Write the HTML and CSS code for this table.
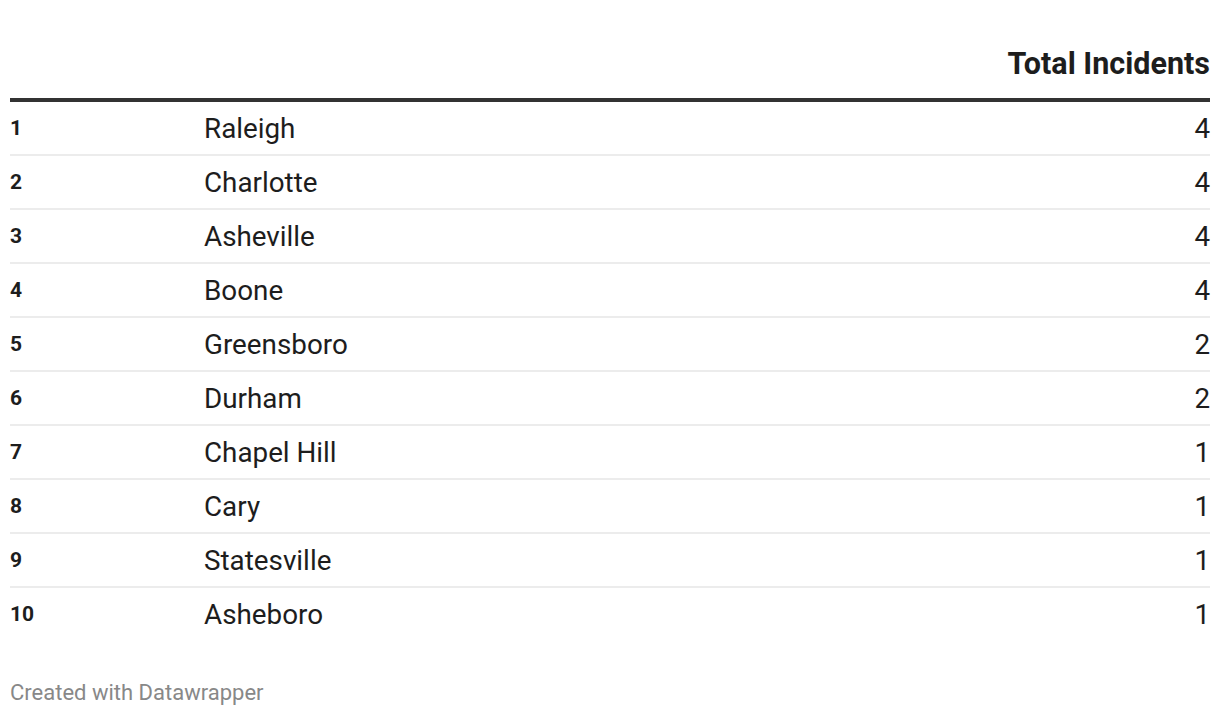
FILE: index.html
```html
<!DOCTYPE html>
<html>
<head>
<meta charset="utf-8">
<link rel="stylesheet" href="styles.css">
</head>
<body>
<div class="chart">
  <table class="tbl">
    <thead>
      <tr>
        <th class="c-rank"></th>
        <th class="c-city"></th>
        <th class="c-val">Total Incidents</th>
      </tr>
    </thead>
    <tbody>
      <tr><td class="c-rank">1</td><td class="c-city">Raleigh</td><td class="c-val">4</td></tr>
      <tr><td class="c-rank">2</td><td class="c-city">Charlotte</td><td class="c-val">4</td></tr>
      <tr><td class="c-rank">3</td><td class="c-city">Asheville</td><td class="c-val">4</td></tr>
      <tr><td class="c-rank">4</td><td class="c-city">Boone</td><td class="c-val">4</td></tr>
      <tr><td class="c-rank">5</td><td class="c-city">Greensboro</td><td class="c-val">2</td></tr>
      <tr><td class="c-rank">6</td><td class="c-city">Durham</td><td class="c-val">2</td></tr>
      <tr><td class="c-rank">7</td><td class="c-city">Chapel Hill</td><td class="c-val">1</td></tr>
      <tr><td class="c-rank">8</td><td class="c-city">Cary</td><td class="c-val">1</td></tr>
      <tr><td class="c-rank">9</td><td class="c-city">Statesville</td><td class="c-val">1</td></tr>
      <tr><td class="c-rank">10</td><td class="c-city">Asheboro</td><td class="c-val">1</td></tr>
    </tbody>
  </table>
  <div class="footer">Created with Datawrapper</div>
</div>
</body>
</html>
```
FILE: styles.css
```css
html, body {
  margin: 0;
  padding: 0;
  background: #fff;
}
body {
  font-family: Roboto, "Liberation Sans", sans-serif;
  color: #1d1d1d;
}
.chart {
  padding: 0 10px;
}
.tbl {
  width: 1200px;
  border-collapse: collapse;
  table-layout: fixed;
}
.tbl thead th {
  height: 100px;
  box-sizing: border-box;
  padding: 0 0 17px 0;
  vertical-align: bottom;
  font-weight: 700;
  font-size: 30.5px;
  line-height: 34px;
  border-bottom: 4px solid #333;
}
.tbl th.c-rank, .tbl td.c-rank { width: 194px; text-align: left; }
.tbl th.c-city, .tbl td.c-city { text-align: left; }
.tbl th.c-val, .tbl td.c-val { width: 300px; text-align: right; }
.tbl tbody td {
  height: 52px;
  padding: 0;
  vertical-align: middle;
  font-size: 27.8px;
  border-bottom: 2px solid #ececec;
}
.tbl tbody tr:last-child td {
  border-bottom: none;
}
.tbl tbody td.c-rank {
  font-size: 21px;
  font-weight: 700;
}
.footer {
  margin-top: 38px;
  font-size: 22px;
  color: #888;
  line-height: 30px;
}
```
